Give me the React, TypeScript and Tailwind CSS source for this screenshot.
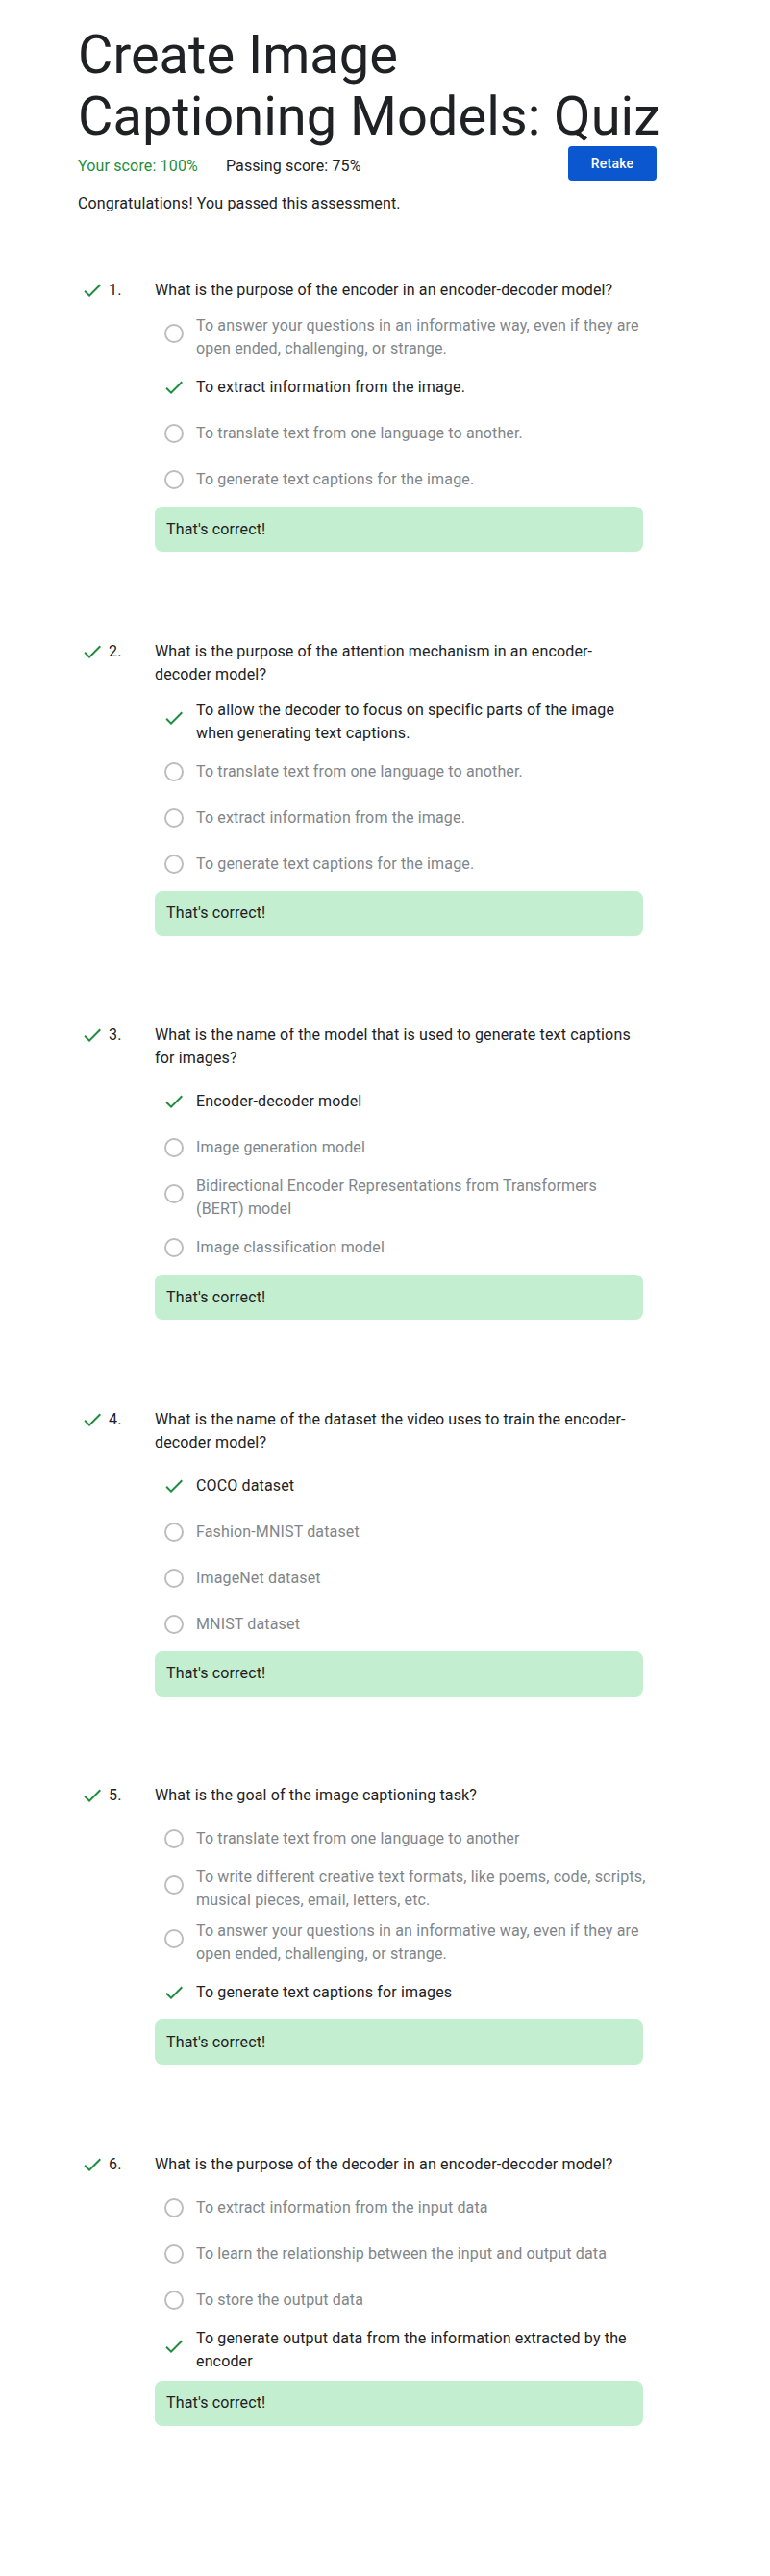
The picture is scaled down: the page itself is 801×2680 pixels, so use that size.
const questions = [
  {
    q: 'What is the purpose of the encoder in an encoder-decoder model?',
    options: [
      'To answer your questions in an informative way, even if they are open ended, challenging, or strange.',
      'To extract information from the image.',
      'To translate text from one language to another.',
      'To generate text captions for the image.',
    ],
    correct: 1,
  },
  {
    q: 'What is the purpose of the attention mechanism in an encoder-decoder model?',
    options: [
      'To allow the decoder to focus on specific parts of the image when generating text captions.',
      'To translate text from one language to another.',
      'To extract information from the image.',
      'To generate text captions for the image.',
    ],
    correct: 0,
  },
  {
    q: 'What is the name of the model that is used to generate text captions for images?',
    options: [
      'Encoder-decoder model',
      'Image generation model',
      'Bidirectional Encoder Representations from Transformers (BERT) model',
      'Image classification model',
    ],
    correct: 0,
  },
  {
    q: 'What is the name of the dataset the video uses to train the encoder-decoder model?',
    options: ['COCO dataset', 'Fashion-MNIST dataset', 'ImageNet dataset', 'MNIST dataset'],
    correct: 0,
  },
  {
    q: 'What is the goal of the image captioning task?',
    options: [
      'To translate text from one language to another',
      'To write different creative text formats, like poems, code, scripts, musical pieces, email, letters, etc.',
      'To answer your questions in an informative way, even if they are open ended, challenging, or strange.',
      'To generate text captions for images',
    ],
    correct: 3,
  },
  {
    q: 'What is the purpose of the decoder in an encoder-decoder model?',
    options: [
      'To extract information from the input data',
      'To learn the relationship between the input and output data',
      'To store the output data',
      'To generate output data from the information extracted by the encoder',
    ],
    correct: 3,
  },
];

function Check() {
  return (
    <svg width="24" height="24" viewBox="0 0 24 24" className="text-[#1e8e3e]">
      <path fill="currentColor" d="M9 16.17 4.83 12l-1.42 1.41L9 19 21 7l-1.41-1.41z" />
    </svg>
  );
}

function Radio() {
  return <div className="w-5 h-5 rounded-full border-2 border-[#bdbdbd]" />;
}

export default function App() {
  return (
    <div className="w-[801px] min-h-[2680px] bg-white pl-[81px] pr-[118px] text-[#202124] font-['Roboto','Liberation_Sans',sans-serif]">
      {/* header */}
      <h1 className="pt-[25px] text-[56px] leading-[64px] font-normal whitespace-nowrap">
        Create Image
        <br />
        Captioning Models: Quiz
      </h1>
      <div className="flex items-center justify-between h-[36px] -mt-px">
        <div className="flex gap-[29px] text-base leading-6 tracking-[0.15px] pt-[5px]">
          <span className="text-[#1e8e3e]">Your score: 100%</span>
          <span>Passing score: 75%</span>
        </div>
        <button className="w-[92px] h-[36px] rounded bg-[#0b57d0] text-white text-sm font-medium tracking-[0.25px]">
          Retake
        </button>
      </div>
      <p className="mt-3 text-base leading-6 tracking-[0.15px]">Congratulations! You passed this assessment.</p>

      {/* questions */}
      <div className="mt-[66px] flex flex-col gap-[91.5px] tracking-[0.15px]">
        {questions.map((item, i) => (
          <div key={i} className="flex">
            <div className="w-[80px] shrink-0 flex items-start h-6 text-base leading-6">
              <div className="ml-[3px] flex items-center h-6">
                <Check />
              </div>
              <span className="ml-[5px]">{i + 1}.</span>
            </div>
            <div className="w-[508px]">
              <p className="text-base leading-6">{item.q}</p>
              <div className="mt-[9px] flex flex-col">
                {item.options.map((opt, j) => {
                  const ok = j === item.correct;
                  return (
                    <div key={j} className="flex -mr-1">
                      <div className="pl-2 w-8 h-12 shrink-0 flex items-center">
                        <div className="w-6 h-6 flex items-center justify-center">
                          {ok ? <Check /> : <Radio />}
                        </div>
                      </div>
                      <div
                        className={
                          ok
                            ? 'ml-[11px] flex-1 min-h-12 py-1 flex items-center text-base leading-6 text-[#202124]'
                            : 'ml-[11px] flex-1 min-h-12 py-1 flex items-center text-base leading-6 text-[#80868b]'
                        }
                      >
                        {opt}
                      </div>
                    </div>
                  );
                })}
              </div>
              <div className="mt-1 h-[47px] rounded-lg bg-[#c4eed0] px-3 flex items-center text-base leading-6">
                That's correct!
              </div>
            </div>
          </div>
        ))}
      </div>
    </div>
  );
}
